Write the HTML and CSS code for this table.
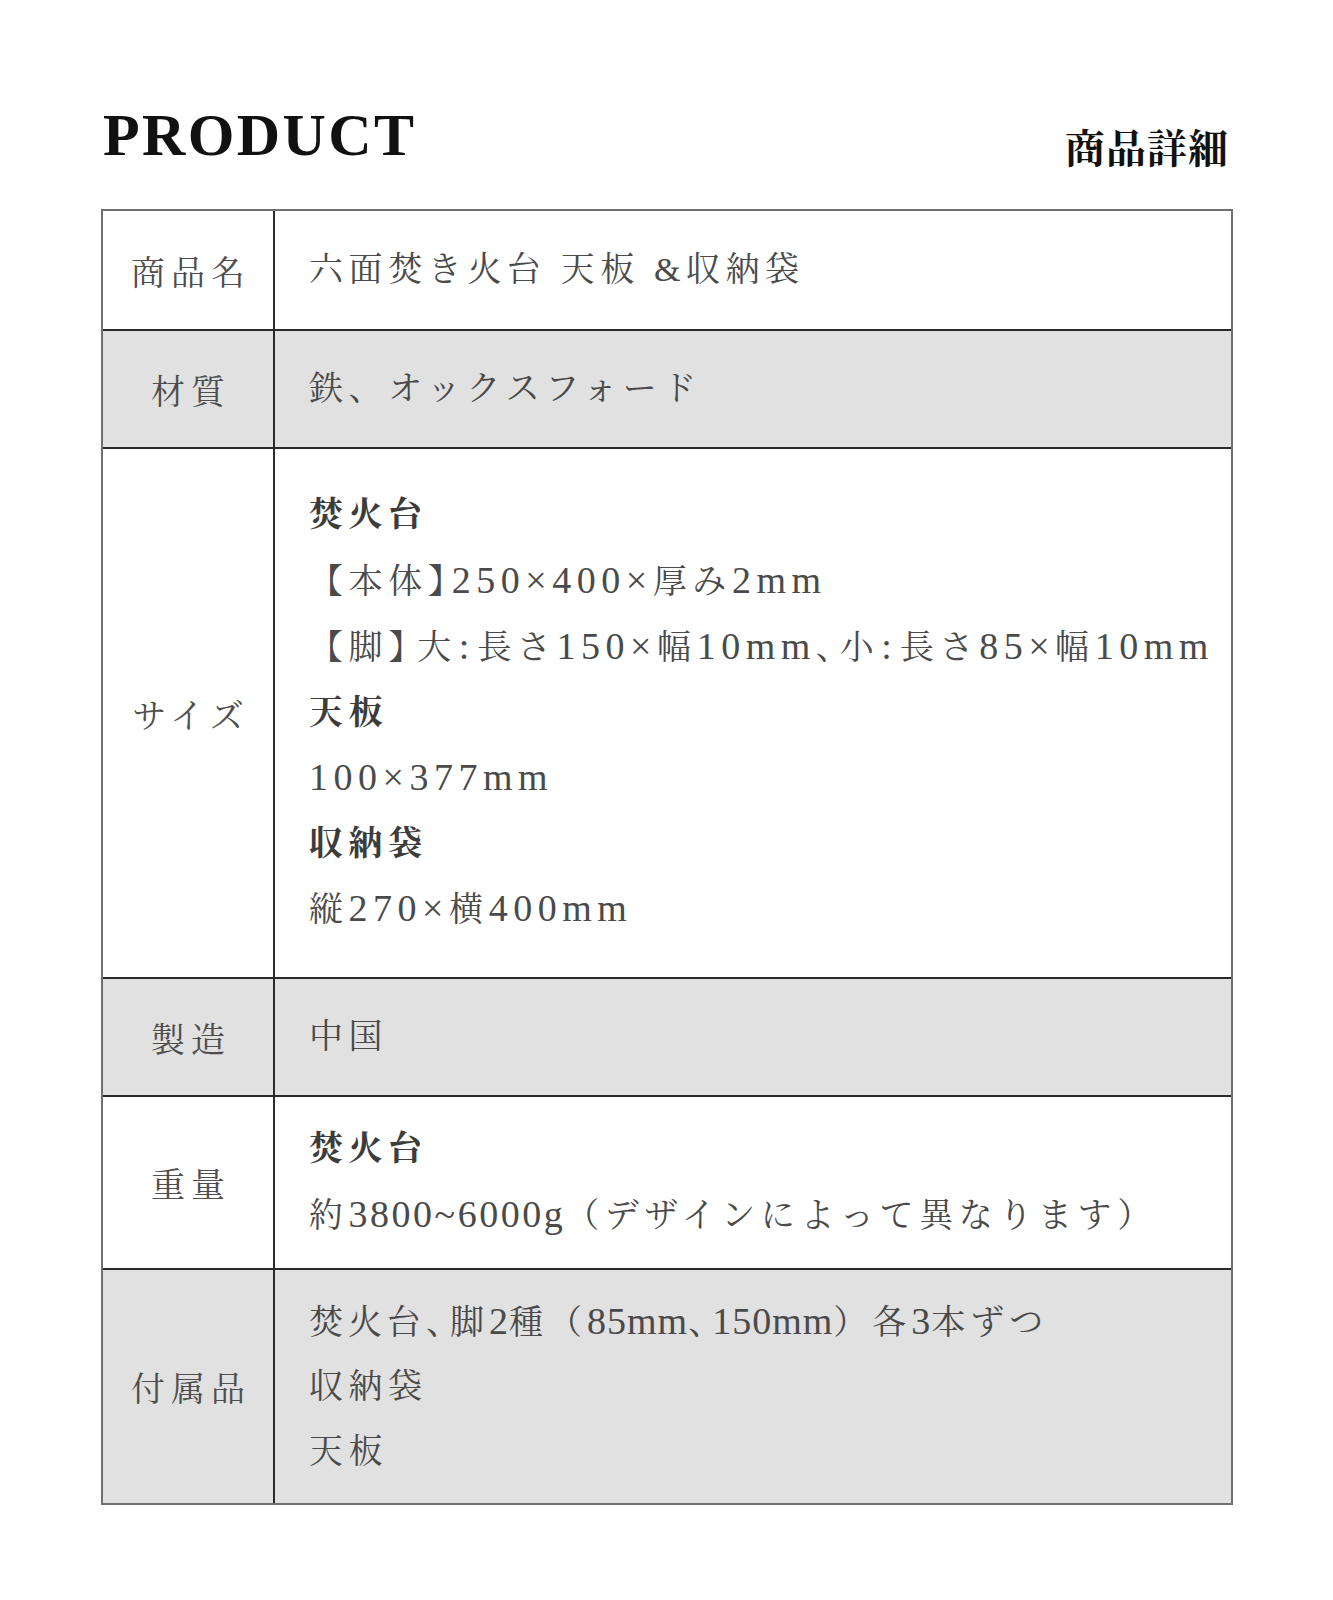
FILE: index.html
```html
<!DOCTYPE html>
<html lang="ja">
<head>
<meta charset="utf-8">
<title>PRODUCT 商品詳細</title>
<link rel="stylesheet" href="styles.css">
</head>
<body>
<div class="page">
  <header class="head">
    <h1 class="title">PRODUCT</h1>
    <h2 class="subtitle">商品詳細</h2>
  </header>
  <div class="spec">
    <div class="row row-name">
      <div class="label">商品名</div>
      <div class="value"><p class="line">六面焚き火台 天板 &amp;収納袋</p></div>
    </div>
    <div class="row row-material shaded">
      <div class="label">材質</div>
      <div class="value"><p class="line">鉄、オックスフォード</p></div>
    </div>
    <div class="row row-size">
      <div class="label">サイズ</div>
      <div class="value">
        <p class="line strong">焚火台</p>
        <p class="line">【本体<span class="br">】</span><span class="n">250×400×</span>厚み<span class="n">2mm</span></p>
        <p class="line">【脚<span class="br2">】</span>大<span class="n k">:</span>長さ<span class="n">150×</span>幅<span class="n">10mm</span><span class="c">、</span>小<span class="n k">:</span>長さ<span class="n">85×</span>幅<span class="n">10mm</span></p>
        <p class="line strong">天板</p>
        <p class="line"><span class="n">100×377mm</span></p>
        <p class="line strong">収納袋</p>
        <p class="line">縦<span class="n">270×</span>横<span class="n">400mm</span></p>
      </div>
    </div>
    <div class="row row-made shaded">
      <div class="label">製造</div>
      <div class="value"><p class="line">中国</p></div>
    </div>
    <div class="row row-weight">
      <div class="label">重量</div>
      <div class="value">
        <p class="line strong">焚火台</p>
        <p class="line">約<span class="w">3800~6000g</span>（デザインによって異なります）</p>
      </div>
    </div>
    <div class="row row-acc shaded">
      <div class="label">付属品</div>
      <div class="value">
        <p class="line acc">焚火台<span class="c">、</span>脚<span class="m">2</span>種（<span class="m">85mm</span><span class="c">、</span><span class="m">150mm</span>）各<span class="m">3</span>本ずつ</p>
        <p class="line">収納袋</p>
        <p class="line">天板</p>
      </div>
    </div>
  </div>
</div>
</body>
</html>
```

FILE: styles.css
```css
html, body {
  margin: 0;
  padding: 0;
  background: #ffffff;
}

body {
  font-family: "Liberation Serif", "Noto Serif CJK JP", "Noto Sans CJK JP", serif;
  color: #4a4a4a;
}

.page {
  width: 1132px;
  margin-left: 101px;
  padding-top: 105px;
}

.head {
  display: flex;
  justify-content: space-between;
  align-items: flex-start;
  margin-bottom: 43px;
}

.title {
  margin: 0;
  font-family: "Liberation Serif", serif;
  font-weight: 700;
  font-size: 60px;
  line-height: 60px;
  letter-spacing: 2.4px;
  color: #111111;
  padding-left: 2px;
}

.subtitle {
  margin: 21px 4px 0 0;
  font-family: "Noto Serif CJK JP", "Noto Sans CJK JP", serif;
  font-weight: 700;
  font-size: 40px;
  line-height: 40px;
  color: #111111;
  letter-spacing: 1px;
}

.spec {
  border: 2px solid #707070;
}

.row {
  display: grid;
  grid-template-columns: 172px 1fr;
  border-top: 2px solid #2a2a2a;
}

.row:first-child {
  border-top: none;
}

.shaded {
  background: #e1e1e1;
}

.row-name { height: 118px; }
.row-material { height: 116px; }
.row-size { height: 528px; }
.row-made { height: 116px; }
.row-weight { height: 171px; }
.row-acc { height: 233px; }

.label {
  display: flex;
  align-items: center;
  justify-content: center;
  border-right: 2px solid #2a2a2a;
  font-size: 34px;
  letter-spacing: 6px;
  padding-left: 6px;
  color: #4e4e4e;
}

.value {
  display: flex;
  flex-direction: column;
  justify-content: center;
  padding-left: 34px;
}

.line {
  margin: 0;
  font-size: 34px;
  line-height: 64.5px;
  letter-spacing: 5.6px;
  white-space: nowrap;
  color: #4a4a4a;
}

.strong {
  font-weight: 700;
  color: #3c3c3c;
}

.n {
  font-family: "Liberation Serif", serif;
  font-size: 38px;
  letter-spacing: 5.5px;
}

.k {
  letter-spacing: 8px;
  margin-left: 2px;
}

.br {
  letter-spacing: -10px;
}

.br2 {
  letter-spacing: -5px;
}

.w {
  font-family: "Liberation Serif", serif;
  font-size: 38px;
  letter-spacing: 2.5px;
}

.acc {
  letter-spacing: 5px;
}

.m {
  font-family: "Liberation Serif", serif;
  font-size: 38px;
  letter-spacing: 1px;
}

.c {
  letter-spacing: -10px;
}
```
